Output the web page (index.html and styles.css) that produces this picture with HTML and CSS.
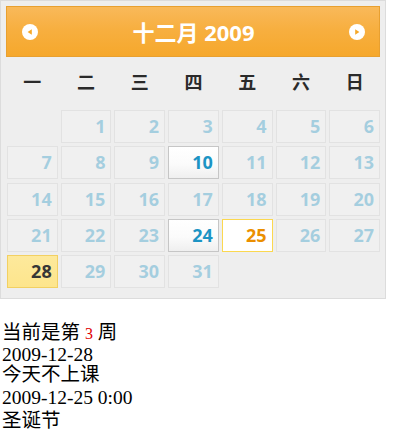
FILE: index.html
```html
<!DOCTYPE html>
<html>
<head>
<meta charset="utf-8">
<link rel="stylesheet" href="styles.css">
</head>
<body>
<div class="cal">
  <div class="head">
    <span class="nav"><svg width="16" height="16" viewBox="0 0 16 16"><circle cx="8" cy="8" r="8" fill="#fff"/><polygon points="9.8,5.2 5.6,8 9.8,10.8" fill="#f6a828"/></svg></span>
    <span class="title">十二月 2009</span>
    <span class="nav"><svg width="16" height="16" viewBox="0 0 16 16"><circle cx="8" cy="8" r="8" fill="#fff"/><polygon points="6.2,5.2 10.4,8 6.2,10.8" fill="#f6a828"/></svg></span>
  </div>
  <div class="dow">
    <span>一</span><span>二</span><span>三</span><span>四</span><span>五</span><span>六</span><span>日</span>
  </div>
  <div class="grid">
    <span class="blank"></span>
    <span class="day off">1</span><span class="day off">2</span><span class="day off">3</span><span class="day off">4</span><span class="day off">5</span><span class="day off">6</span>
    <span class="day off">7</span><span class="day off">8</span><span class="day off">9</span><span class="day on">10</span><span class="day off">11</span><span class="day off">12</span><span class="day off">13</span>
    <span class="day off">14</span><span class="day off">15</span><span class="day off">16</span><span class="day off">17</span><span class="day off">18</span><span class="day off">19</span><span class="day off">20</span>
    <span class="day off">21</span><span class="day off">22</span><span class="day off">23</span><span class="day on">24</span><span class="day active">25</span><span class="day off">26</span><span class="day off">27</span>
    <span class="day today">28</span><span class="day off">29</span><span class="day off">30</span><span class="day off">31</span>
  </div>
</div>
<div class="info">
  <div class="line l1">当前是第 <span class="wk">3</span> 周</div>
  <div class="line l2">2009-12-28</div>
  <div class="line l3">今天不上课</div>
  <div class="line l4">2009-12-25 0:00</div>
  <div class="line l5">圣诞节</div>
</div>
</body>
</html>
```
FILE: styles.css
```css
html, body {
  margin: 0;
  padding: 0;
  background: #fff;
}

.cal {
  box-sizing: border-box;
  width: 386px;
  height: 299px;
  border: 1px solid #dcdcdc;
  background: #eeeeee;
  padding: 5px;
  font-family: "Open Sans", "Noto Sans CJK SC", sans-serif;
}

.head {
  box-sizing: border-box;
  height: 51px;
  border: 1px solid #e8a030;
  background: linear-gradient(#f9b95a 0%, #f7af40 45%, #f6a82c 100%);
  display: flex;
  align-items: center;
  padding: 0 14px 0 15px;
}

.nav {
  width: 16px;
  height: 16px;
  display: flex;
}

.title {
  flex: 1;
  text-align: center;
  color: #fff;
  font-weight: bold;
  font-size: 22px;
  line-height: 1;
}

.dow {
  display: grid;
  grid-template-columns: repeat(7, 1fr);
  column-gap: 3px;
  margin-left: 1px;
  height: 50px;
  line-height: 50px;
  text-align: center;
  font-size: 18px;
  font-weight: bold;
  color: #2a2a2a;
}

.grid {
  display: grid;
  grid-template-columns: repeat(7, 1fr);
  grid-auto-rows: 33px;
  column-gap: 3px;
  row-gap: 3.25px;
  margin-top: 3px;
  margin-left: 1px;
}

.day {
  box-sizing: border-box;
  border: 1px solid #cccccc;
  background: linear-gradient(#ffffff, #f6f6f6 60%, #ededed);
  color: #1c94c4;
  text-align: right;
  padding-right: 5px;
  font-size: 18px;
  font-weight: bold;
  line-height: 31px;
}

.off {
  opacity: 0.35;
  background: #f6f6f6;
}

.on {
  background: linear-gradient(#ffffff 0%, #fbfbfb 55%, #efefef 100%);
  border-color: #c6c6c6;
}

.active {
  background: #ffffff;
  border-color: #fbd850;
  color: #eb8f00;
}

.today {
  background: linear-gradient(#fde99c, #fde58c);
  border-color: #f2d062;
  color: #363636;
}

.info {
  margin-top: 24px;
  margin-left: 2px;
  font-family: "Liberation Serif", "Noto Sans CJK SC", serif;
  font-size: 19.5px;
  line-height: 20px;
  color: #000;
}

.l1 { height: 22px; }
.l2 { height: 20px; }
.l3 { height: 23px; }
.l4 { height: 23px; }
.l5 { height: 20px; }

.wk {
  color: #e00000;
  font-size: 16px;
}
```
